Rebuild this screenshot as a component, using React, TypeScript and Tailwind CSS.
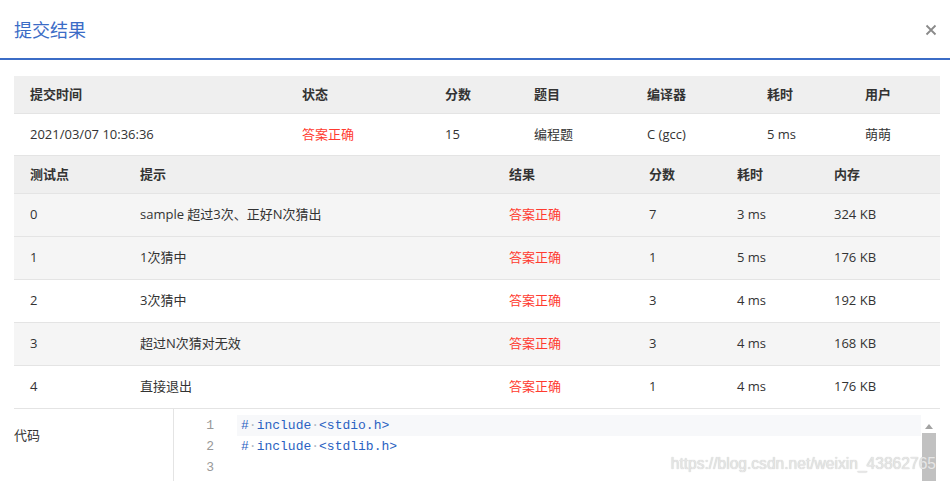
import React from 'react';

const font = { fontFamily: '"Open Sans", "Noto Sans CJK SC", sans-serif' };

const summaryCols = [
  { label: '提交时间', w: 'w-[272px]' },
  { label: '状态', w: 'w-[143px]' },
  { label: '分数', w: 'w-[89px]' },
  { label: '题目', w: 'w-[113px]' },
  { label: '编译器', w: 'w-[120px]' },
  { label: '耗时', w: 'w-[98px]' },
  { label: '用户', w: 'flex-1' },
];

const caseCols = [
  { label: '测试点', w: 'w-[110px]' },
  { label: '提示', w: 'w-[369px]' },
  { label: '结果', w: 'w-[140px]' },
  { label: '分数', w: 'w-[88px]' },
  { label: '耗时', w: 'w-[97px]' },
  { label: '内存', w: 'flex-1' },
];

const cases = [
  { id: '0', hint: 'sample 超过3次、正好N次猜出', score: '7', time: '3 ms', mem: '324 KB', gray: true },
  { id: '1', hint: '1次猜中', score: '1', time: '5 ms', mem: '176 KB', gray: true },
  { id: '2', hint: '3次猜中', score: '3', time: '4 ms', mem: '192 KB', gray: false },
  { id: '3', hint: '超过N次猜对无效', score: '3', time: '4 ms', mem: '168 KB', gray: true },
  { id: '4', hint: '直接退出', score: '1', time: '4 ms', mem: '176 KB', gray: false },
];

function CodeLine({ text }: { text: string }) {
  // spaces shown as middle dots, like the editor's whitespace markers
  const parts = text.split(' ');
  return (
    <>
      {parts.map((p, i) => (
        <React.Fragment key={i}>
          {i > 0 && <span className="text-[#b0b8c4]">·</span>}
          {p}
        </React.Fragment>
      ))}
    </>
  );
}

export default function App() {
  return (
    <div className="relative w-[950px] h-[481px] overflow-hidden bg-white text-[13px] text-[#333]" style={font}>
      {/* Dialog header */}
      <div className="flex items-center justify-between h-[60px] pl-[14px] pr-[13px] border-b-2 border-[#3b6cc6]">
        <span className="text-[18px] text-[#3b6cc6] pt-[2px]">提交结果</span>
        <svg width="12" height="12" viewBox="0 0 12 12" className="mt-[1px]">
          <path d="M1.5 1.5 L10.5 10.5 M10.5 1.5 L1.5 10.5" stroke="#8a8a8a" strokeWidth="1.8" />
        </svg>
      </div>

      <div className="mx-[14px] mt-[16px] w-[926px]">
        {/* Summary table */}
        <div className="flex h-[38px] items-center bg-[#efefef] font-bold border-b border-[#e4e4e4]">
          {summaryCols.map((c) => (
            <div key={c.label} className={`${c.w} pl-[16px]`}>{c.label}</div>
          ))}
        </div>
        <div className="flex h-[42px] items-center bg-white border-b border-[#e4e4e4]">
          <div className="w-[272px] pl-[16px]">2021/03/07 10:36:36</div>
          <div className="w-[143px] pl-[16px] text-[#ff3b30]">答案正确</div>
          <div className="w-[89px] pl-[16px]">15</div>
          <div className="w-[113px] pl-[16px]">编程题</div>
          <div className="w-[120px] pl-[16px]">C (gcc)</div>
          <div className="w-[98px] pl-[16px]">5 ms</div>
          <div className="flex-1 pl-[16px]">萌萌</div>
        </div>

        {/* Test cases */}
        <div className="flex h-[38px] items-center bg-[#efefef] font-bold border-b border-[#e4e4e4]">
          {caseCols.map((c) => (
            <div key={c.label} className={`${c.w} pl-[16px]`}>{c.label}</div>
          ))}
        </div>
        {cases.map((r) => (
          <div
            key={r.id}
            className={`flex h-[43px] items-center border-b border-[#e4e4e4] ${r.gray ? 'bg-[#f5f5f5]' : 'bg-white'}`}
          >
            <div className="w-[110px] pl-[16px]">{r.id}</div>
            <div className="w-[369px] pl-[16px]">{r.hint}</div>
            <div className="w-[140px] pl-[16px] text-[#ff3b30]">答案正确</div>
            <div className="w-[88px] pl-[16px]">{r.score}</div>
            <div className="w-[97px] pl-[16px]">{r.time}</div>
            <div className="flex-1 pl-[16px]">{r.mem}</div>
          </div>
        ))}

        {/* Code */}
        <div className="flex h-[80px]">
          <div className="w-[159px] pt-[17px]">代码</div>
          <div className="flex-1 flex border-l border-[#e4e4e4] pt-[6px]">
            <div className="flex-1 text-[13px] leading-[21px]" style={{ fontFamily: '"Liberation Mono", "DejaVu Sans Mono", monospace' }}>
              {[
                '#include <stdio.h>',
                '#include <stdlib.h>',
                '',
              ].map((line, i) => (
                <div key={i} className="flex h-[21px]">
                  <div className="w-[45px] text-right text-[#999] pr-[5px]">{i + 1}</div>
                  <div className={`flex-1 ml-[18px] pl-[4px] text-[#2a62c2] ${i === 0 ? 'bg-[#f7f8fa]' : ''}`}>
                    <CodeLine text={line.replace('#include', '# include')} />
                  </div>
                </div>
              ))}
            </div>
            <div className="w-[16px] mr-[3px] flex flex-col items-center">
              <svg width="8" height="5" viewBox="0 0 8 5" className="mt-[9px]">
                <path d="M4 0 L8 5 L0 5 Z" fill="#a3a3a3" />
              </svg>
              <div className="mt-[4px] w-[14px] flex-1 bg-[#c1c1c1]" />
            </div>
          </div>
        </div>
      </div>

      {/* watermark */}
      <div
        className="absolute right-[14px] top-[452px] text-[15.6px] text-[#e6e6e6] [text-shadow:0_0_1px_#bbb]"
        style={{ fontFamily: '"Liberation Sans", Arial, sans-serif' }}
      >
        https://blog.csdn.net/weixin_43862765
      </div>
    </div>
  );
}
